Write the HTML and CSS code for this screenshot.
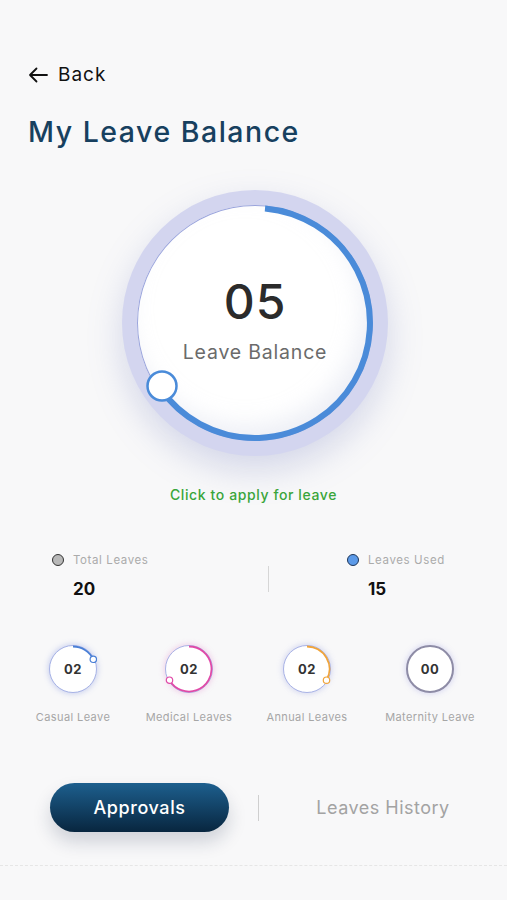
FILE: index.html
```html
<!DOCTYPE html>
<html lang="en">
<head>
    <meta charset="UTF-8">
    <title>My Leave Balance</title>
    <link rel="stylesheet" href="styles.css">
</head>
<body>
    <div class="page">
        <div class="back">
            <svg class="back-icon" width="20" height="16" viewBox="0 0 20 16">
                <path d="M19 8H2M8.5 1.5L2 8l6.5 6.5" fill="none" stroke="#111" stroke-width="1.8" stroke-linecap="round" stroke-linejoin="round"/>
            </svg>
            <span>Back</span>
        </div>
        <h1 class="title">My Leave Balance</h1>

        <div class="ring-wrap">
            <div class="ring">
                <div class="ring-face">
                    <div class="ring-value">05</div>
                    <div class="ring-label">Leave Balance</div>
                </div>
                <svg class="ring-arc" width="266" height="266" viewBox="0 0 266 266">
                    <path d="M143 18.4 A115 115 0 1 1 38.1 198" fill="none" stroke="#4a8bd9" stroke-width="6"/>
                    <circle cx="40" cy="196" r="14.5" fill="#fff" stroke="#4a8bd9" stroke-width="2.5"/>
                </svg>
            </div>
        </div>

        <div class="apply">Click to apply for leave</div>

        <div class="stats">
            <div class="stat stat-left">
                <div class="stat-head"><span class="dot dot-gray"></span>Total Leaves</div>
                <div class="stat-value">20</div>
            </div>
            <div class="stat-divider"></div>
            <div class="stat stat-right">
                <div class="stat-head"><span class="dot dot-blue"></span>Leaves Used</div>
                <div class="stat-value">15</div>
            </div>
        </div>

        <div class="types">
            <div class="type">
                <div class="mini mini-blue">
                    <svg class="mini-arc" width="48" height="48" viewBox="0 0 48 48">
                        <path d="M24 1.5 A22.5 22.5 0 0 1 44.3 14.3" fill="none" stroke="#4a7fd6" stroke-width="1.8"/>
                        <circle cx="44.3" cy="14.3" r="3.2" fill="#fff" stroke="#4a7fd6" stroke-width="1.2"/>
                    </svg>
                    <span>02</span>
                </div>
                <div class="type-label">Casual Leave</div>
            </div>
            <div class="type">
                <div class="mini mini-pink">
                    <svg class="mini-arc" width="48" height="48" viewBox="0 0 48 48">
                        <path d="M24 1.5 A22.5 22.5 0 1 1 4.5 35.2" fill="none" stroke="#e04aa8" stroke-width="1.8"/>
                        <circle cx="4.5" cy="35.2" r="3.2" fill="#fff" stroke="#e04aa8" stroke-width="1.2"/>
                    </svg>
                    <span>02</span>
                </div>
                <div class="type-label">Medical Leaves</div>
            </div>
            <div class="type">
                <div class="mini mini-orange">
                    <svg class="mini-arc" width="48" height="48" viewBox="0 0 48 48">
                        <path d="M24 1.5 A22.5 22.5 0 0 1 43.5 35.2" fill="none" stroke="#f0a43a" stroke-width="1.8"/>
                        <circle cx="43.5" cy="35.2" r="3.2" fill="#fff" stroke="#f0a43a" stroke-width="1.2"/>
                    </svg>
                    <span>02</span>
                </div>
                <div class="type-label">Annual Leaves</div>
            </div>
            <div class="type">
                <div class="mini mini-gray">
                    <span>00</span>
                </div>
                <div class="type-label">Maternity Leave</div>
            </div>
        </div>

        <div class="tabs">
            <button class="tab-active">Approvals</button>
            <div class="tab-divider"></div>
            <div class="tab">Leaves History</div>
        </div>

        <div class="dash"></div>
    </div>
</body>
</html>
```

FILE: styles.css
```css
body {
    margin: 0;
    background: #f8f8f9;
    font-family: Inter, "Open Sans", sans-serif;
    color: #222;
}
.page {
    width: 507px;
    height: 900px;
    overflow: hidden;
    padding-top: 62px;
    box-sizing: border-box;
}
.back {
    display: flex;
    align-items: center;
    gap: 10px;
    padding-left: 28px;
    font-size: 19px;
    line-height: 26px;
    letter-spacing: 1px;
    color: #111;
}
.title {
    margin: 26px 0 0 28px;
    font-size: 28.5px;
    line-height: 36px;
    font-weight: 500;
    letter-spacing: 1.5px;
    color: #17405f;
}
.ring-wrap {
    display: flex;
    justify-content: center;
    padding-left: 3px;
    margin-top: 40px;
}
.ring {
    position: relative;
    width: 266px;
    height: 266px;
    border-radius: 50%;
    background: #d3d5ef;
    box-shadow: 0 14px 34px rgba(120, 130, 190, 0.28);
    display: flex;
    align-items: center;
    justify-content: center;
}
.ring-face {
    width: 236px;
    height: 236px;
    border-radius: 50%;
    background: #fff;
    box-shadow: inset 0 0 0 1px #9aa4dc, inset -10px -14px 24px rgba(200, 205, 225, 0.35);
    display: flex;
    flex-direction: column;
    align-items: center;
    justify-content: center;
}
.ring-value {
    font-size: 48px;
    line-height: 52px;
    font-weight: 500;
    letter-spacing: 1px;
    color: #2b2b2b;
    margin-top: -6px;
}
.ring-label {
    margin-top: 12px;
    font-size: 19.5px;
    line-height: 24px;
    letter-spacing: 0.8px;
    color: #6b6b6b;
}
.ring-arc {
    position: absolute;
    left: 0;
    top: 0;
}
.apply {
    margin-top: 30px;
    text-align: center;
    font-size: 14px;
    line-height: 18px;
    font-weight: 500;
    letter-spacing: 0.6px;
    color: #3aa63a;
}
.stats {
    display: flex;
    align-items: flex-start;
    margin-top: 48px;
}
.stat {
    box-sizing: border-box;
    flex: none;
}
.stat-left {
    width: 268px;
    padding-left: 52px;
}
.stat-right {
    width: 238px;
    padding-left: 78px;
}
.stat-head {
    display: flex;
    align-items: center;
    gap: 9px;
    font-size: 11.5px;
    line-height: 16px;
    letter-spacing: 0.6px;
    color: #ababab;
}
.dot {
    width: 10px;
    height: 10px;
    border-radius: 50%;
    border: 1.5px solid #333;
}
.dot-gray {
    background: #b8b8b8;
}
.dot-blue {
    background: #5c9ae8;
    border-color: #1d3558;
}
.stat-value {
    margin-top: 10px;
    padding-left: 21px;
    font-size: 17px;
    line-height: 22px;
    font-weight: 700;
    color: #111;
}
.stat-divider {
    flex: none;
    width: 1px;
    height: 26px;
    margin-top: 14px;
    background: #d6d6d6;
}
.types {
    display: grid;
    grid-template-columns: 116px 116px 120px 126px;
    padding-left: 15px;
    margin-top: 45px;
}
.type {
    display: flex;
    flex-direction: column;
    align-items: center;
}
.mini {
    position: relative;
    width: 48px;
    height: 48px;
    border-radius: 50%;
    background: #fff;
    display: flex;
    align-items: center;
    justify-content: center;
    font-size: 13px;
    font-weight: 700;
    letter-spacing: 0.4px;
    color: #333;
    box-sizing: border-box;
}
.mini-blue {
    border: 1.5px solid #a7b3e6;
    box-shadow: 0 0 6px rgba(110, 130, 220, 0.45);
}
.mini-pink {
    border: 1.5px solid #a9b3e6;
    box-shadow: 0 0 6px rgba(220, 100, 190, 0.35);
}
.mini-orange {
    border: 1.5px solid #a9b3e6;
    box-shadow: 0 0 6px rgba(130, 140, 220, 0.4);
}
.mini-gray {
    border: 2px solid #8e8ca6;
    box-shadow: 0 0 6px rgba(130, 130, 220, 0.35);
}
.mini-arc {
    position: absolute;
    left: -1.5px;
    top: -1.5px;
}
.type-label {
    margin-top: 17px;
    font-size: 11px;
    line-height: 14px;
    letter-spacing: 0.4px;
    color: #a6a6a6;
}
.tabs {
    display: flex;
    align-items: center;
    margin-top: 59px;
    padding-left: 50px;
}
.tab-active {
    flex: none;
    width: 179px;
    height: 49px;
    border: none;
    border-radius: 25px;
    background: linear-gradient(#1d5f8e, #08263f);
    box-shadow: 0 10px 18px rgba(20, 40, 70, 0.18);
    color: #fff;
    font-family: inherit;
    font-size: 18px;
    font-weight: 500;
    letter-spacing: 0.6px;
}
.tab-divider {
    flex: none;
    width: 1px;
    height: 26px;
    margin-left: 29px;
    background: #cfcfcf;
}
.tab {
    width: 252px;
    text-align: center;
    font-size: 18px;
    letter-spacing: 0.5px;
    color: #a3a3a3;
}
.dash {
    margin-top: 33px;
    border-top: 1px dashed #e6e6e6;
}
```
